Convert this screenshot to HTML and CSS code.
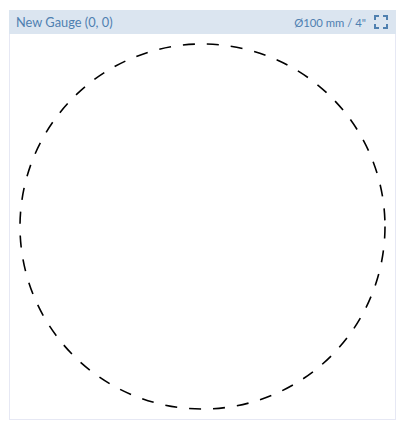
FILE: index.html
```html
<!DOCTYPE html>
<html lang="en">
<head>
<meta charset="utf-8">
<title>New Gauge</title>
<link rel="stylesheet" href="styles.css">
</head>
<body>
<section class="panel">
  <header class="bar">
    <span class="title">New Gauge (0, 0)</span>
    <div class="meta">
      <span class="size">Ø100 mm / 4"</span>
      <svg class="expand" viewBox="0 0 14 14" width="14" height="14" aria-hidden="true">
        <path d="M1 5V1H5M9 1H13V5M13 9V13H9M5 13H1V9"/>
      </svg>
    </div>
  </header>
  <svg class="gauge" viewBox="0 0 384 384" width="384" height="384" aria-hidden="true">
    <circle cx="192.5" cy="192.5" r="182.5"/>
  </svg>
</section>
</body>
</html>
```
FILE: styles.css
```css
html, body {
  margin: 0;
  padding: 0;
  background: #fff;
}
body {
  padding: 10px 0 0 9px;
  font-family: "Lato", "Open Sans", sans-serif;
}
.panel {
  width: 387px;
  height: 410px;
  box-sizing: border-box;
  border: 1px solid #e6e8f4;
  border-top: 0;
  display: flex;
  flex-direction: column;
}
.bar {
  height: 24px;
  flex: none;
  margin: 0 -1px;
  padding: 0 8px 0 7px;
  background: #dbe5f0;
  color: #4f80b0;
  display: flex;
  align-items: center;
  justify-content: space-between;
}
.title {
  font-size: 12.8px;
}
.meta {
  display: flex;
  align-items: center;
  gap: 8px;
}
.size {
  font-size: 11.3px;
}
.expand {
  display: block;
  fill: none;
  stroke: #4f80b0;
  stroke-width: 2;
}
.gauge {
  display: block;
  flex: none;
}
.gauge circle {
  fill: none;
  stroke: #000;
  stroke-width: 1.6;
  stroke-dasharray: 12 12;
}
```
